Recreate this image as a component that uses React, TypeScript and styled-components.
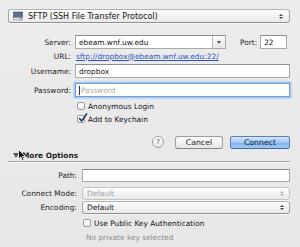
import React from "react";
import styled, { createGlobalStyle, css } from "styled-components";

const GlobalStyle = createGlobalStyle`
  html, body {
    margin: 0;
    padding: 0;
    background: #e9e9e9;
  }
  body {
    font-family: "DejaVu Sans", "Liberation Sans", sans-serif;
    font-size: 7.4px;
    color: #141414;
  }
`;

const Sheet = styled.div`
  position: relative;
  width: 300px;
  height: 247px;
  box-sizing: border-box;
  padding: 9px 10px 0 8px;
  background: linear-gradient(#ececec, #e7e7e7);
  display: flex;
  flex-direction: column;
  overflow: hidden;
`;

const popupLook = css`
  box-sizing: border-box;
  border: 1px solid #a3a3a3;
  border-top-color: #b4b4b4;
  border-bottom-color: #8f8f8f;
  border-radius: 3px;
  background: linear-gradient(#ffffff, #f1f1f1 55%, #e9e9e9);
  box-shadow: 0 1px 0 rgba(255, 255, 255, 0.6);
`;

const ProtocolPopup = styled.div`
  ${popupLook};
  height: 14px;
  display: flex;
  align-items: center;
  padding: 0 6px 0 4px;
  gap: 5px;
  font-size: 8px;
`;

const PopupText = styled.span<{ $disabled?: boolean }>`
  flex: 1;
  color: ${(p) => (p.$disabled ? "#a2a2a2" : "#141414")};
`;

const Row = styled.div<{ $h: number; $mt: number; $label: number }>`
  display: grid;
  grid-template-columns: ${(p) => p.$label}px 1fr;
  column-gap: ${(p) => (p.$label > 66 ? 5 : 4)}px;
  align-items: center;
  height: ${(p) => p.$h}px;
  margin-top: ${(p) => p.$mt}px;
`;

const Label = styled.span`
  text-align: right;
  color: #1c1c1c;
  white-space: nowrap;
`;

const Field = styled.div<{ $focus?: boolean; $w?: number }>`
  box-sizing: border-box;
  height: 100%;
  ${(p) => (p.$w ? `width: ${p.$w}px;` : "")}
  display: flex;
  align-items: center;
  padding: 0 3px;
  background: #fff;
  border: 1px solid #a9a9a9;
  border-top-color: #8c8c8c;
  ${(p) =>
    p.$focus &&
    css`
      border-color: #6d9fd9;
      box-shadow: 0 0 0 1px #a6c8ef, 0 0 2px 1px #8ab7ea;
    `}
`;

const Placeholder = styled.span`
  color: #a8a8a8;
  display: flex;
  align-items: center;
  &::before {
    content: "";
    width: 1px;
    height: 9px;
    background: #333;
    margin-right: 1px;
  }
`;

const ServerLine = styled.div`
  display: flex;
  align-items: center;
  height: 100%;
`;

const Combo = styled.div`
  box-sizing: border-box;
  width: 151px;
  height: 100%;
  display: flex;
  background: #fff;
  border: 1px solid #a9a9a9;
  border-top-color: #8c8c8c;
`;

const ComboText = styled.span`
  flex: 1;
  display: flex;
  align-items: center;
  padding-left: 3px;
`;

const ComboButton = styled.span`
  width: 12px;
  border-left: 1px solid #b9b9b9;
  background: linear-gradient(#fdfdfd, #e6e6e6);
  display: flex;
  align-items: center;
  justify-content: center;
  &::after {
    content: "";
    border-left: 2px solid transparent;
    border-right: 2px solid transparent;
    border-top: 3px solid #555;
  }
`;

const PortLabel = styled.span`
  margin-left: 14px;
  margin-right: 3px;
  color: #1c1c1c;
`;

const Link = styled.a`
  color: #2b52c6;
  text-decoration: underline;
  padding-left: 1px;
`;

const CheckLine = styled.label<{ $indent: number }>`
  grid-column: 2;
  display: flex;
  align-items: center;
  gap: 3px;
  padding-left: ${(p) => p.$indent}px;
`;

const Box = styled.span`
  position: relative;
  box-sizing: border-box;
  width: 8px;
  height: 8px;
  border: 1px solid #9b9b9b;
  border-radius: 2px;
  background: linear-gradient(#ffffff, #ededed);
  svg {
    position: absolute;
    left: 0;
    top: -3px;
  }
`;

const ButtonRow = styled.div`
  display: flex;
  justify-content: flex-end;
  align-items: center;
  height: 14px;
  margin-top: 11px;
  gap: 7px;
`;

const HelpButton = styled.span`
  box-sizing: border-box;
  width: 12px;
  height: 12px;
  border-radius: 50%;
  border: 1px solid #a0a0a0;
  background: linear-gradient(#ffffff, #e8e8e8);
  display: flex;
  align-items: center;
  justify-content: center;
  font-size: 7px;
  color: #444;
  margin-right: 4px;
`;

const PushButton = styled.span<{ $w: number; $primary?: boolean }>`
  box-sizing: border-box;
  width: ${(p) => p.$w}px;
  height: 13px;
  border-radius: 3px;
  display: flex;
  align-items: center;
  justify-content: center;
  font-size: 7.8px;
  border: 1px solid #9d9d9d;
  border-bottom-color: #868686;
  background: linear-gradient(#ffffff, #f2f2f2 50%, #e6e6e6);
  color: #141414;
  ${(p) =>
    p.$primary &&
    css`
      border-color: #5b7fb6;
      border-bottom-color: #44679f;
      background: linear-gradient(#d3e6fb, #a2c8f2 50%, #7fb1ea 51%, #9dcaf6);
      color: #0b1626;
    `}
`;

const Disclosure = styled.div`
  display: flex;
  align-items: center;
  gap: 3px;
  height: 11px;
  margin-top: 1px;
  padding-left: 5px;
  font-weight: bold;
  color: #1c1c1c;
`;

const Triangle = styled.span`
  width: 0;
  height: 0;
  border-left: 3px solid transparent;
  border-right: 3px solid transparent;
  border-top: 5px solid #555;
`;

const Divider = styled.div`
  height: 1px;
  background: #a9a9a9;
  box-shadow: 0 1px 0 #f6f6f6;
`;

const Popup = styled.div<{ $disabled?: boolean }>`
  ${popupLook};
  height: 100%;
  display: flex;
  align-items: center;
  padding: 0 5px 0 4px;
  ${(p) =>
    p.$disabled &&
    css`
      border-color: #c3c3c3;
    `}
`;

const Arrows = styled.span<{ $disabled?: boolean }>`
  display: flex;
  flex-direction: column;
  gap: 1px;
  &::before,
  &::after {
    content: "";
    width: 0;
    height: 0;
    border-left: 2px solid transparent;
    border-right: 2px solid transparent;
  }
  &::before {
    border-bottom: 2px solid ${(p) => (p.$disabled ? "#b0b0b0" : "#444")};
  }
  &::after {
    border-top: 2px solid ${(p) => (p.$disabled ? "#b0b0b0" : "#444")};
  }
`;

const Note = styled.span`
  grid-column: 2;
  padding-left: 4px;
  color: #8c8c8c;
`;

const Cursor = styled.svg`
  position: absolute;
  left: 18px;
  top: 149px;
`;

const Check = () => (
  <svg width="10" height="10" viewBox="0 0 10 10">
    <path
      d="M1.5 5.5 L3.6 8 L8.6 1"
      fill="none"
      stroke="#1d3a73"
      strokeWidth="1.6"
      strokeLinecap="round"
      strokeLinejoin="round"
    />
  </svg>
);

const DriveIcon = () => (
  <svg width="10" height="10" viewBox="0 0 10 10">
    <rect x="0.5" y="1" width="9" height="5.5" fill="#5b6f8c" stroke="#3f4f66" strokeWidth="0.6" />
    <rect x="0.5" y="6.5" width="9" height="2.5" fill="#e6e9ee" stroke="#7b8593" strokeWidth="0.6" />
    <rect x="6.5" y="7.2" width="2" height="1" fill="#6c7a8c" />
  </svg>
);

export default function App() {
  return (
    <>
      <GlobalStyle />
      <Sheet>
        <ProtocolPopup>
          <DriveIcon />
          <PopupText>SFTP (SSH File Transfer Protocol)</PopupText>
          <Arrows />
        </ProtocolPopup>

        <Row $h={14} $mt={12} $label={63}>
          <Label>Server:</Label>
          <ServerLine>
            <Combo>
              <ComboText>ebeam.wnf.uw.edu</ComboText>
              <ComboButton />
            </Combo>
            <PortLabel>Port:</PortLabel>
            <Field $w={27}>22</Field>
          </ServerLine>
        </Row>

        <Row $h={14} $mt={0} $label={63}>
          <Label>URL:</Label>
          <span>
            <Link>sftp://dropbox@ebeam.wnf.uw.edu:22/</Link>
          </span>
        </Row>

        <Row $h={14} $mt={1} $label={63}>
          <Label>Username:</Label>
          <Field>dropbox</Field>
        </Row>

        <Row $h={14} $mt={5} $label={63}>
          <Label>Password:</Label>
          <Field $focus>
            <Placeholder>Password</Placeholder>
          </Field>
        </Row>

        <Row $h={10} $mt={4} $label={63}>
          <CheckLine $indent={2}>
            <Box />
            Anonymous Login
          </CheckLine>
        </Row>

        <Row $h={10} $mt={3} $label={63}>
          <CheckLine $indent={2}>
            <Box>
              <Check />
            </Box>
            Add to Keychain
          </CheckLine>
        </Row>

        <ButtonRow>
          <HelpButton>?</HelpButton>
          <PushButton $w={48}>Cancel</PushButton>
          <PushButton $w={60} $primary>
            Connect
          </PushButton>
        </ButtonRow>

        <Disclosure>
          <Triangle />
          More Options
        </Disclosure>
        <Divider />

        <Row $h={13} $mt={7} $label={69}>
          <Label>Path:</Label>
          <Field />
        </Row>

        <Row $h={13} $mt={5} $label={69}>
          <Label>Connect Mode:</Label>
          <Popup $disabled>
            <PopupText $disabled>Default</PopupText>
            <Arrows $disabled />
          </Popup>
        </Row>

        <Row $h={13} $mt={1} $label={69}>
          <Label>Encoding:</Label>
          <Popup>
            <PopupText>Default</PopupText>
            <Arrows />
          </Popup>
        </Row>

        <Row $h={10} $mt={4} $label={69}>
          <CheckLine $indent={1}>
            <Box />
            Use Public Key Authentication
          </CheckLine>
        </Row>

        <Row $h={10} $mt={4} $label={69}>
          <Note>No private key selected</Note>
        </Row>

        <Cursor width="9" height="13" viewBox="0 0 9 13">
          <path
            d="M0.5 0.5 L0.5 10 L2.8 8 L4.5 12 L6 11.3 L4.4 7.5 L7.5 7.5 Z"
            fill="#111"
            stroke="#fff"
            strokeWidth="0.8"
            strokeLinejoin="round"
          />
        </Cursor>
      </Sheet>
    </>
  );
}
